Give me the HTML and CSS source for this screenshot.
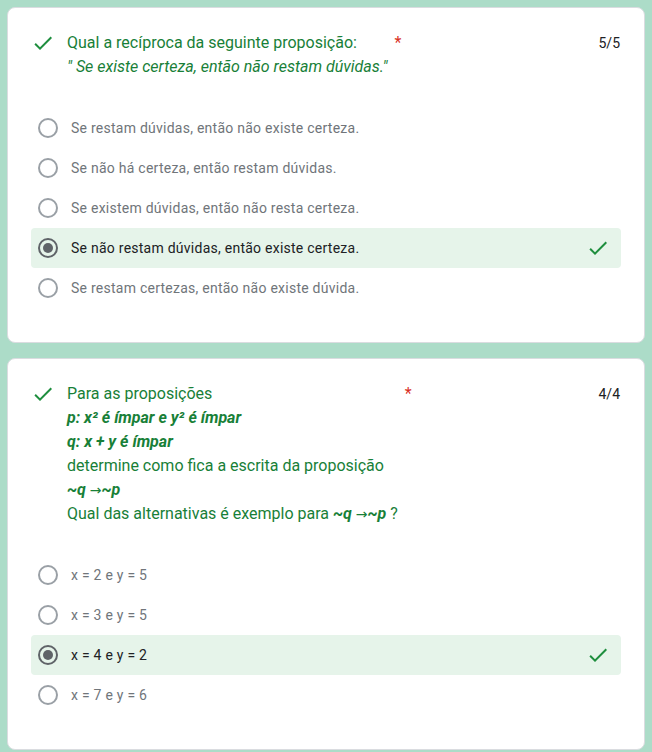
FILE: index.html
```html
<!DOCTYPE html>
<html lang="pt">
<head>
<meta charset="utf-8">
<link rel="stylesheet" href="styles.css">
</head>
<body>
<div class="page">
  <section class="card">
    <div class="header">
      <svg class="qcheck" viewBox="0 0 24 24" width="24" height="24"><path d="M9 16.17L4.83 12l-1.42 1.41L9 19 21 7l-1.41-1.41z"/></svg>
      <div class="title">
        <div class="title-text">
          <div>Qual a recíproca da seguinte proposição:</div>
          <div><i>" Se existe certeza, então não restam dúvidas."</i></div>
        </div>
        <span class="req">*</span>
      </div>
      <div class="points">5/5</div>
    </div>
    <div class="options">
      <div class="opt"><span class="radio"></span><span class="label">Se restam dúvidas, então não existe certeza.</span></div>
      <div class="opt"><span class="radio"></span><span class="label">Se não há certeza, então restam dúvidas.</span></div>
      <div class="opt"><span class="radio"></span><span class="label">Se existem dúvidas, então não resta certeza.</span></div>
      <div class="opt correct"><span class="radio on"></span><span class="label">Se não restam dúvidas, então existe certeza.</span><svg class="ocheck" viewBox="0 0 24 24" width="24" height="24"><path d="M9 16.17L4.83 12l-1.42 1.41L9 19 21 7l-1.41-1.41z"/></svg></div>
      <div class="opt"><span class="radio"></span><span class="label">Se restam certezas, então não existe dúvida.</span></div>
    </div>
  </section>
  <section class="card">
    <div class="header">
      <svg class="qcheck" viewBox="0 0 24 24" width="24" height="24"><path d="M9 16.17L4.83 12l-1.42 1.41L9 19 21 7l-1.41-1.41z"/></svg>
      <div class="title">
        <div class="title-text">
          <div>Para as proposições</div>
          <div><b><i>p: x² é ímpar e y² é ímpar</i></b></div>
          <div><b><i>q: x + y é ímpar</i></b></div>
          <div>determine como fica a escrita da proposição</div>
          <div><b><i>~q <span class="arrow">→</span>~p</i></b></div>
          <div>Qual das alternativas é exemplo para <b><i>~q <span class="arrow">→</span>~p</i></b> ?</div>
        </div>
        <span class="req">*</span>
      </div>
      <div class="points">4/4</div>
    </div>
    <div class="options">
      <div class="opt"><span class="radio"></span><span class="label">x = 2 e y = 5</span></div>
      <div class="opt"><span class="radio"></span><span class="label">x = 3 e y = 5</span></div>
      <div class="opt correct"><span class="radio on"></span><span class="label">x = 4 e y = 2</span><svg class="ocheck" viewBox="0 0 24 24" width="24" height="24"><path d="M9 16.17L4.83 12l-1.42 1.41L9 19 21 7l-1.41-1.41z"/></svg></div>
      <div class="opt"><span class="radio"></span><span class="label">x = 7 e y = 6</span></div>
    </div>
  </section>
</div>
</body>
</html>
```
FILE: styles.css
```css
* { box-sizing: border-box; }
html, body { margin: 0; padding: 0; }
body {
  background: #acdcc8;
  font-family: Roboto, "Liberation Sans", Arial, sans-serif;
  color: #202124;
}
.page {
  padding: 7px 7px 0;
  display: flex;
  flex-direction: column;
  gap: 15px;
}
.card {
  background: #fff;
  border: 1px solid #dadce0;
  border-radius: 8px;
  padding: 23px 23px 34px;
}
.header {
  display: flex;
  align-items: flex-start;
}
.qcheck {
  flex: none;
  fill: #1e8e3e;
  margin-right: 12px;
}
.title {
  flex: 1;
  display: flex;
  align-items: flex-start;
  color: #188038;
  font-size: 16px;
  line-height: 24px;
}
.title b { font-weight: 700; }
.arrow {
  font-family: "DejaVu Sans", sans-serif;
  font-style: normal;
  font-weight: 400;
  font-size: 14px;
}
.req {
  color: #d93025;
  margin-left: 7px;
  font-size: 16px;
}
.points {
  flex: none;
  font-size: 14px;
  line-height: 24px;
  color: #202124;
  margin-right: 1px;
}
.options {
  margin-top: 29px;
  display: flex;
  flex-direction: column;
}
.opt {
  height: 40px;
  display: flex;
  align-items: center;
  padding: 0 11px 0 7px;
  border-radius: 4px;
  font-size: 14px;
  letter-spacing: 0.25px;
  color: #70757a;
}
.opt.correct {
  background: #e6f4ea;
  color: #202124;
}
.radio {
  flex: none;
  width: 20px;
  height: 20px;
  border: 2px solid #9aa0a6;
  border-radius: 50%;
  margin-right: 13px;
  display: flex;
  align-items: center;
  justify-content: center;
}
.radio.on {
  border-color: #5f6368;
}
.radio.on::after {
  content: "";
  width: 10px;
  height: 10px;
  border-radius: 50%;
  background: #5f6368;
}
.label { flex: 1; }
.ocheck {
  flex: none;
  fill: #1e8e3e;
}
```
